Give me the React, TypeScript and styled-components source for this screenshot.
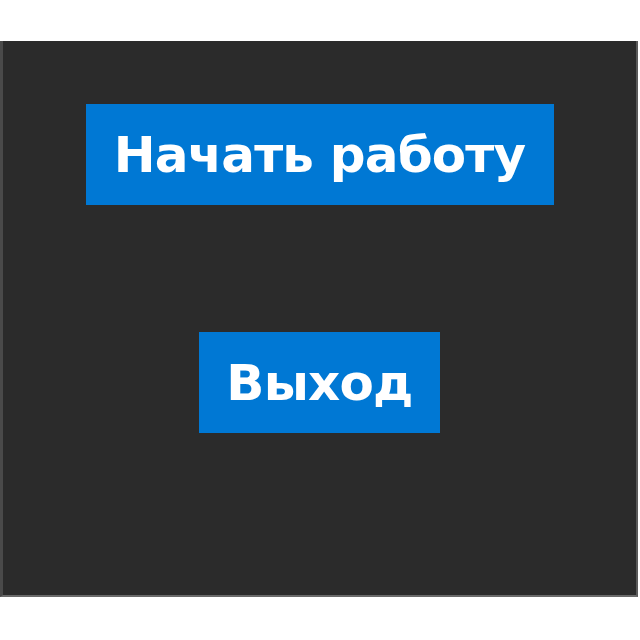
import styled, { createGlobalStyle } from 'styled-components';

const GlobalStyle = createGlobalStyle`
  html, body {
    margin: 0;
    padding: 0;
    background: #ffffff;
  }
`;

const Screen = styled.div`
  padding-top: 41px;
`;

const Panel = styled.div`
  box-sizing: border-box;
  width: 638px;
  height: 556px;
  background-color: #2b2b2b;
  border-left: 3px solid #4a4a4a;
  border-right: 2px solid #5a5a5a;
  border-bottom: 2px solid #6a6a6a;
  display: flex;
  flex-direction: column;
  align-items: center;
  padding-top: 63px;
  gap: 127px;
`;

const MenuButton = styled.button<{ $width: number }>`
  width: ${({ $width }) => $width}px;
  height: 101px;
  border: none;
  margin: 0;
  padding: 0;
  background-color: #0078d4;
  color: #ffffff;
  font-family: 'DejaVu Sans', sans-serif;
  font-weight: bold;
  font-size: 50px;
  letter-spacing: -0.8px;
  display: flex;
  align-items: center;
  justify-content: center;
  cursor: pointer;
`;

const App = () => {
  return (
    <>
      <GlobalStyle />
      <Screen>
        <Panel>
          <MenuButton $width={468}>Начать работу</MenuButton>
          <MenuButton $width={241}>Выход</MenuButton>
        </Panel>
      </Screen>
    </>
  );
};

export default App;
